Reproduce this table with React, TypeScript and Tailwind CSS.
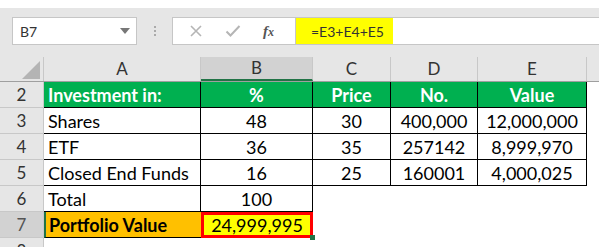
const cols = ['A', 'B', 'C', 'D', 'E'];
const widths = ['w-[157px]', 'w-[112px]', 'w-[78px]', 'w-[87px]', 'w-[109px]'];

const rows = [
  ['Shares', '48', '30', '400,000', '12,000,000'],
  ['ETF', '36', '35', '257142', '8,999,970'],
  ['Closed End Funds', '16', '25', '160001', '4,000,025'],
];

const RowNum = ({ n, active = false }: { n: number; active?: boolean }) => (
  <div
    className={`w-[44px] shrink-0 flex items-center justify-center border-r border-b border-[#c8c8c8] text-[17px] ${
      active ? 'bg-[#d2d2d2] text-[#555]' : 'bg-[#e6e6e6] text-[#333]'
    }`}
  >
    {n}
  </div>
);

export default function App() {
  return (
    <div className="w-[599px] h-[247px] overflow-hidden bg-white font-['Lato','Liberation_Sans',sans-serif] text-black">
      {/* formula bar */}
      <div className="mt-[8px] h-[49px] bg-[#e6e6e6] flex items-start pt-[9px] pl-[12px]">
        <div className="w-[125px] h-[28px] bg-white border border-[#c6c6c6] flex items-center justify-between pl-[7px] pr-[6px] text-[14px] text-[#333]">
          <span>B7</span>
          <svg width="10" height="6" viewBox="0 0 10 6">
            <path d="M0 0h10L5 6z" fill="#777" />
          </svg>
        </div>
        <div className="w-[35px] h-[28px] flex flex-col items-center justify-center gap-[2px]">
          <span className="w-[2px] h-[2px] bg-[#aaa]" />
          <span className="w-[2px] h-[2px] bg-[#aaa]" />
          <span className="w-[2px] h-[2px] bg-[#aaa]" />
        </div>
        <div className="w-[124px] h-[28px] bg-white border border-[#c6c6c6] flex items-center">
          <svg width="14" height="14" viewBox="0 0 14 14" className="ml-[16px]">
            <path d="M2 2l10 10M12 2L2 12" stroke="#b5b5b5" strokeWidth="1.6" />
          </svg>
          <svg width="16" height="14" viewBox="0 0 16 14" className="ml-[22px]">
            <path d="M1.5 7.5l4 4L14.5 2" stroke="#b5b5b5" strokeWidth="2" fill="none" />
          </svg>
          <span className="ml-[22px] italic font-bold text-[15px] text-[#555] font-['Liberation_Serif',serif]">
            f<span className="text-[12px]">x</span>
          </span>
        </div>
        <div className="flex-1 h-[28px] bg-white border-y border-[#c6c6c6] flex">
          <div className="w-[97px] h-full bg-[#ffff00] flex items-center pl-[15px] text-[14px] text-[#333]">
            =E3+E4+E5
          </div>
        </div>
      </div>

      {/* column headers */}
      <div className="h-[25px] flex bg-[#e6e6e6] border-b border-[#9f9f9f]">
        <div className="w-[44px] shrink-0 relative border-r border-[#c8c8c8]">
          <svg width="18" height="18" viewBox="0 0 18 18" className="absolute right-[3px] bottom-[2px]">
            <path d="M18 0v18H0z" fill="#b4b4b4" />
          </svg>
        </div>
        {cols.map((c, i) => (
          <div
            key={c}
            className={`${widths[i]} shrink-0 flex items-center justify-center border-r border-[#c8c8c8] text-[17px] text-[#333] ${
              c === 'B' ? 'bg-[#d2d2d2] border-b-2 border-b-[#217346]' : ''
            }`}
          >
            {c}
          </div>
        ))}
        <div className="flex-1" />
      </div>

      {/* row 2: table heading */}
      <div className="h-[26px] flex">
        <RowNum n={2} />
        {['Investment in:', '%', 'Price', 'No.', 'Value'].map((t, i) => (
          <div
            key={t}
            className={`${widths[i]} shrink-0 bg-[#00b050] border-r border-b border-black flex items-center pt-[2px] font-bold text-white text-[18px] ${
              i === 0 ? 'pl-[4px]' : 'justify-center'
            }`}
          >
            {t}
          </div>
        ))}
      </div>

      {rows.map((r, ri) => (
        <div key={r[0]} className="h-[26px] flex">
          <RowNum n={ri + 3} />
          {r.map((t, i) => (
            <div
              key={i}
              className={`${widths[i]} shrink-0 border-r border-b border-black flex items-center pt-[2px] text-[18px] ${
                i === 0 ? 'pl-[4px]' : 'justify-center'
              }`}
            >
              {t}
            </div>
          ))}
        </div>
      ))}

      {/* row 6: total */}
      <div className="h-[26px] flex">
        <RowNum n={6} />
        <div className="w-[157px] shrink-0 border-r border-b border-black flex items-center pt-[2px] pl-[4px] text-[18px]">Total</div>
        <div className="w-[112px] shrink-0 border-r border-b border-black flex items-center pt-[2px] justify-center text-[18px]">100</div>
      </div>

      {/* row 7: portfolio value */}
      <div className="h-[26px] flex">
        <RowNum n={7} active />
        <div className="w-[157px] shrink-0 bg-[#ffc000] border-l-2 border-l-[#217346] border-b border-black flex items-center pt-[2px] pl-[3px] font-bold text-[18px]">
          Portfolio Value
        </div>
        <div className="relative w-[112px] shrink-0 bg-[#ffff00] border-[3px] border-[#ff0000] flex items-center pt-[1px] justify-center text-[18px]">
          24,999,995
          <span className="absolute -right-[5px] -bottom-[5px] w-[5px] h-[5px] bg-[#217346]" />
        </div>
      </div>

      {/* row 8 */}
      <div className="h-[26px] flex">
        <RowNum n={8} />
      </div>
    </div>
  );
}
